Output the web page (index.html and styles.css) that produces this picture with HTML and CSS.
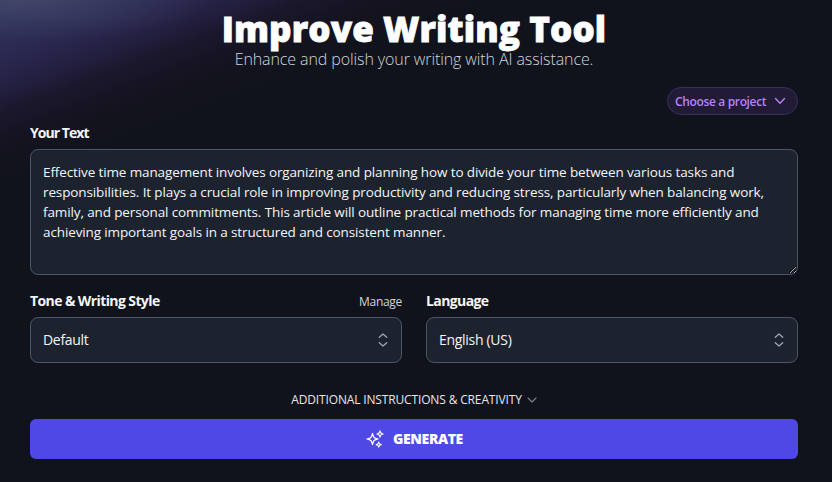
FILE: index.html
```html
<!DOCTYPE html>
<html lang="en">
<head>
    <meta charset="UTF-8">
    <meta name="viewport" content="width=device-width, initial-scale=1.0">
    <title>Improve Writing Tool</title>
    <link rel="stylesheet" href="styles.css">
</head>
<body>
    <main class="container">
        <header class="page-header">
            <h1>Improve Writing Tool</h1>
            <p>Enhance and polish your writing with AI assistance.</p>
        </header>

        <div class="project-row">
            <button class="project-btn" type="button">
                <span>Choose a project</span>
                <svg width="12" height="12" viewBox="0 0 12 12"><path d="M1.5 3.5 6 8.3l4.5-4.8"/></svg>
            </button>
        </div>

        <label class="label text-label" for="text">Your Text</label>
        <textarea class="field" id="text" spellcheck="false">Effective time management involves organizing and planning how to divide your time between various tasks and responsibilities. It plays a crucial role in improving productivity and reducing stress, particularly when balancing work, family, and personal commitments. This article will outline practical methods for managing time more efficiently and achieving important goals in a structured and consistent manner.</textarea>

        <div class="options">
            <div class="option">
                <div class="option-head">
                    <span class="label">Tone &amp; Writing Style</span>
                    <a class="manage">Manage</a>
                </div>
                <div class="field select">
                    <span>Default</span>
                    <svg width="10" height="14" viewBox="0 0 10 14"><path d="M1.3 4.3 5 1l3.7 3.3M1.3 9.7 5 13l3.7-3.3"/></svg>
                </div>
            </div>
            <div class="option">
                <div class="option-head">
                    <span class="label">Language</span>
                </div>
                <div class="field select">
                    <span>English (US)</span>
                    <svg width="10" height="14" viewBox="0 0 10 14"><path d="M1.3 4.3 5 1l3.7 3.3M1.3 9.7 5 13l3.7-3.3"/></svg>
                </div>
            </div>
        </div>

        <div class="more">
            <span>ADDITIONAL INSTRUCTIONS &amp; CREATIVITY</span>
            <svg width="10" height="10" viewBox="0 0 10 10"><path d="M1 3l4 4 4-4"/></svg>
        </div>

        <button class="generate" type="button">
            <svg width="20" height="20" viewBox="0 0 24 24"><path d="M9.8 15.9 9 18.75l-.8-2.85a4.5 4.5 0 0 0-3.1-3.1L2.25 12l2.85-.8a4.5 4.5 0 0 0 3.1-3.1L9 5.25l.8 2.85a4.5 4.5 0 0 0 3.1 3.1l2.85.8-2.85.8a4.5 4.5 0 0 0-3.1 3.1ZM18.26 8.7 18 9.75l-.26-1.04a3.4 3.4 0 0 0-2.45-2.45L14.25 6l1.04-.26a3.4 3.4 0 0 0 2.45-2.45L18 2.25l.26 1.04a3.4 3.4 0 0 0 2.45 2.45L21.75 6l-1.04.26a3.4 3.4 0 0 0-2.45 2.45ZM16.9 20.57l-.4 1.18-.4-1.18a2.25 2.25 0 0 0-1.42-1.42l-1.18-.4 1.18-.4a2.25 2.25 0 0 0 1.42-1.42l.4-1.18.4 1.18a2.25 2.25 0 0 0 1.42 1.42l1.18.4-1.18.4a2.25 2.25 0 0 0-1.42 1.42Z"/></svg>
            <span>GENERATE</span>
        </button>
    </main>
</body>
</html>
```

FILE: styles.css
```css
* {
    box-sizing: border-box;
}

body {
    margin: 0;
    height: 482px;
    overflow: hidden;
    font-family: 'Open Sans', 'Noto Sans', sans-serif;
    font-size: 14px;
    color: #f4f5f7;
    background:
        radial-gradient(ellipse 190px 42px at 20px 0, rgba(86, 90, 112, 0.5) 0%, rgba(70, 76, 110, 0.3) 55%, transparent 100%),
        linear-gradient(159.4deg, #2f335c 0, #2b2a52 50px, #242042 82px, #1a172b 108px, #14131f 140px, #10131c 175px);
}

button,
textarea {
    font-family: inherit;
    color: inherit;
    margin: 0;
}

svg {
    fill: none;
    stroke: currentColor;
    stroke-width: 1.4;
    stroke-linecap: round;
    stroke-linejoin: round;
    flex: none;
}

.container {
    padding: 7px 34px 0 30px;
}

.page-header {
    text-align: center;
    white-space: nowrap;
}

.page-header h1 {
    margin: 0;
    font-size: 35px;
    font-weight: 800;
    line-height: 43px;
    letter-spacing: 0.1px;
    color: #fff;
    -webkit-text-stroke: 0.8px #fff;
}

.page-header p {
    margin: 0;
    font-size: 16px;
    font-weight: 300;
    line-height: 19px;
    letter-spacing: -0.1px;
    color: #d1d5db;
}

.project-row {
    display: flex;
    justify-content: flex-end;
    margin-top: 18px;
}

.project-btn {
    display: flex;
    align-items: center;
    justify-content: space-between;
    width: 131px;
    height: 28px;
    padding: 0 11px 0 7px;
    border: 1px solid #34305c;
    border-radius: 14px;
    background: #211b35;
    color: #b583f5;
    font-size: 12px;
    font-weight: 600;
    letter-spacing: -0.35px;
    white-space: nowrap;
}

.label {
    font-size: 14px;
    font-weight: 700;
    line-height: 20px;
    letter-spacing: -0.6px;
    white-space: nowrap;
}

.text-label {
    display: block;
    margin: 8px 0 6px;
    letter-spacing: -0.95px;
}

.field {
    border: 1px solid #4b5563;
    border-radius: 8px;
    background: #1c232e;
    padding: 12px;
    font-size: 14px;
    line-height: 20px;
}

textarea.field {
    display: block;
    width: 100%;
    height: 126px;
    outline: none;
    resize: vertical;
    font-size: 13.5px;
    letter-spacing: -0.12px;
}

.options {
    display: grid;
    grid-template-columns: 1fr 1fr;
    gap: 24px;
    margin-top: 16px;
}

.option-head {
    display: flex;
    justify-content: space-between;
    height: 20px;
    margin-bottom: 6px;
}

.manage {
    font-size: 12px;
    line-height: 22px;
    letter-spacing: -0.3px;
    color: #d1d5db;
}

.select {
    display: flex;
    align-items: center;
    justify-content: space-between;
    height: 46px;
    padding: 0 13px 0 12px;
    letter-spacing: -0.3px;
}

.select svg {
    color: #9ca3af;
}

.more {
    display: flex;
    align-items: center;
    justify-content: center;
    gap: 5px;
    margin-top: 27px;
    font-size: 12px;
    line-height: 20px;
    letter-spacing: -0.15px;
    white-space: nowrap;
    color: #e5e7eb;
}

.more svg {
    color: #7b8190;
    stroke-width: 1.1;
}

.generate {
    display: flex;
    align-items: center;
    justify-content: center;
    gap: 8px;
    width: 100%;
    height: 40px;
    margin-top: 9px;
    padding-bottom: 2px;
    border: 0;
    border-radius: 6px;
    background: #5048e5;
    color: #fff;
    font-size: 14px;
    font-weight: 800;
    letter-spacing: -0.4px;
}
```
